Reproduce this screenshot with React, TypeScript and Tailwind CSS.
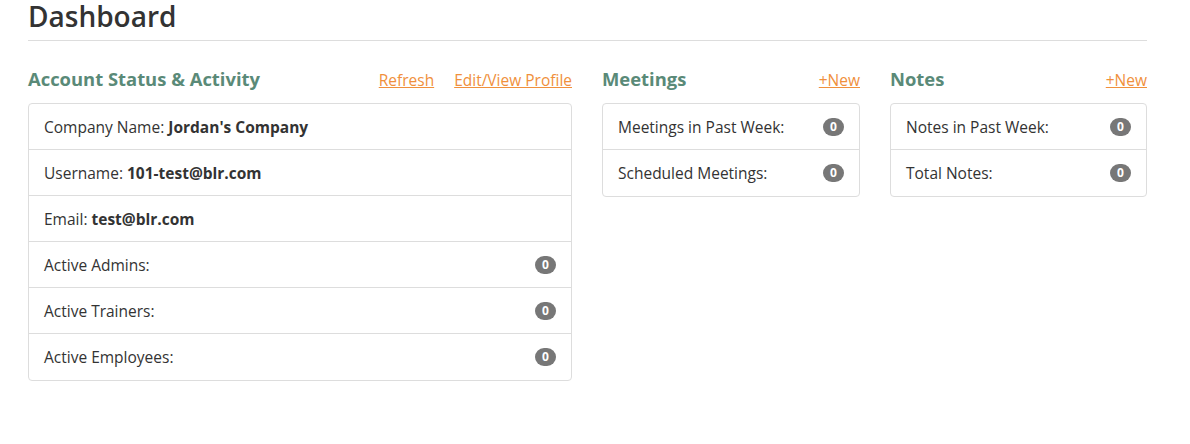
const font = { fontFamily: '"Open Sans", "Liberation Sans", sans-serif' }

type Row = { label: string; value?: string; count?: number }

const account: Row[] = [
  { label: 'Company Name:', value: "Jordan's Company" },
  { label: 'Username:', value: '101-test@blr.com' },
  { label: 'Email:', value: 'test@blr.com' },
  { label: 'Active Admins:', count: 0 },
  { label: 'Active Trainers:', count: 0 },
  { label: 'Active Employees:', count: 0 },
]

const meetings: Row[] = [
  { label: 'Meetings in Past Week:', count: 0 },
  { label: 'Scheduled Meetings:', count: 0 },
]

const notes: Row[] = [
  { label: 'Notes in Past Week:', count: 0 },
  { label: 'Total Notes:', count: 0 },
]

function Badge({ n }: { n: number }) {
  return (
    <span className="inline-flex h-[18px] min-w-[21px] items-center justify-center rounded-full bg-[#777] px-[7px] text-[12px] font-bold leading-none text-white">
      {n}
    </span>
  )
}

function List({ rows }: { rows: Row[] }) {
  return (
    <div className="rounded-[4px] border border-[#ddd] bg-white">
      {rows.map((r, i) => (
        <div
          key={r.label}
          className={`flex h-[46px] items-center justify-between px-[15px] text-[15.5px] leading-5 text-[#333] ${i < rows.length - 1 ? 'border-b border-[#ddd]' : ''}`}
        >
          <span>
            {r.label}
            {r.value && <b className="font-bold"> {r.value}</b>}
          </span>
          {r.count !== undefined && <Badge n={r.count} />}
        </div>
      ))}
    </div>
  )
}

function Section({ title, links, rows }: { title: string; links: string[]; rows: Row[] }) {
  return (
    <div className="flex flex-col">
      <div className="mb-[14px] flex h-5 items-baseline justify-between">
        <h2 className="text-[18.4px] font-bold leading-5 text-[#5a8a78]">{title}</h2>
        <div className="flex gap-5">
          {links.map((l) => (
            <a key={l} href="#" className="text-[15.5px] leading-5 text-[#f0903c] underline">
              {l}
            </a>
          ))}
        </div>
      </div>
      <List rows={rows} />
    </div>
  )
}

export default function App() {
  return (
    <div className="min-h-screen bg-white" style={font}>
      <div className="mx-[28px] w-[1119px]">
        <h1 className="text-[28px] font-semibold leading-[33px] text-[#333]">Dashboard</h1>
        <hr className="mt-[7px] border-t border-[#ddd]" />
        <div className="mt-[28px] grid grid-cols-[544px_258px_257px] gap-[30px]">
          <Section title="Account Status & Activity" links={['Refresh', 'Edit/View Profile']} rows={account} />
          <Section title="Meetings" links={['+New']} rows={meetings} />
          <Section title="Notes" links={['+New']} rows={notes} />
        </div>
      </div>
    </div>
  )
}
